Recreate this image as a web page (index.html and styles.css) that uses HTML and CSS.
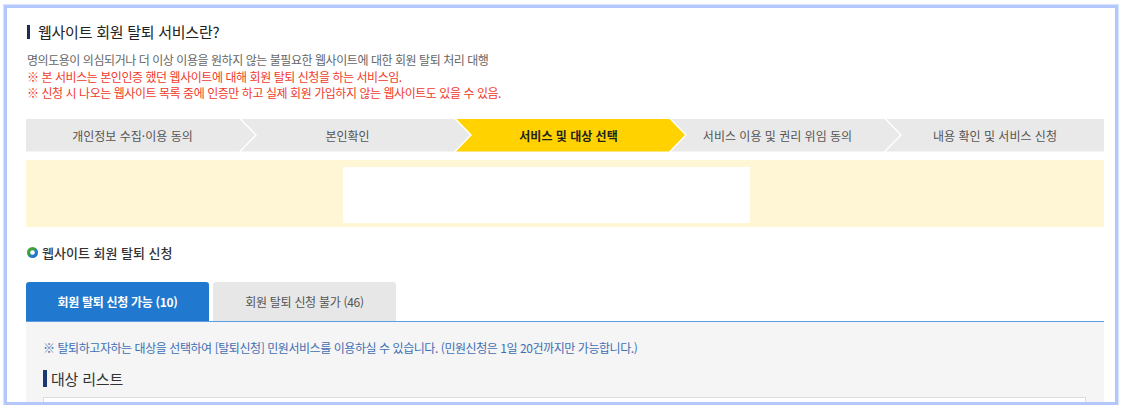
FILE: index.html
```html
<!DOCTYPE html>
<html lang="ko">
<head>
<meta charset="utf-8">
<title>웹사이트 회원 탈퇴 서비스</title>
<link rel="stylesheet" href="styles.css">
</head>
<body>
<div class="frame">
  <div class="content">
    <h2 class="title">웹사이트 회원 탈퇴 서비스란?</h2>
    <p class="desc">명의도용이 의심되거나 더 이상 이용을 원하지 않는 불필요한 웹사이트에 대한 회원 탈퇴 처리 대행</p>
    <p class="warn">※ 본 서비스는 본인인증 했던 웹사이트에 대해 회원 탈퇴 신청을 하는 서비스임.</p>
    <p class="warn">※ 신청 시 나오는 웹사이트 목록 중에 인증만 하고 실제 회원 가입하지 않는 웹사이트도 있을 수 있음.</p>

    <ol class="steps">
      <li class="step first">개인정보 수집·이용 동의</li>
      <li class="step">본인확인</li>
      <li class="step active">서비스 및 대상 선택</li>
      <li class="step">서비스 이용 및 권리 위임 동의</li>
      <li class="step last">내용 확인 및 서비스 신청</li>
    </ol>

    <div class="banner">
      <div class="banner-box"></div>
    </div>

    <h3 class="section">
      <svg class="ring" width="11" height="11" viewBox="0 0 11 11" aria-hidden="true">
        <defs>
          <linearGradient id="rg" x1="0" y1="0" x2="1" y2="1">
            <stop offset="0" stop-color="#4caf2f"/>
            <stop offset="0.45" stop-color="#3a9a3c"/>
            <stop offset="0.55" stop-color="#2c7fd0"/>
            <stop offset="1" stop-color="#1f63c0"/>
          </linearGradient>
        </defs>
        <circle cx="5.5" cy="5.5" r="5.5" fill="url(#rg)"/>
        <circle cx="5.5" cy="5.5" r="2.3" fill="#fff"/>
      </svg>
      웹사이트 회원 탈퇴 신청
    </h3>

    <div class="tabs">
      <div class="tab on">회원 탈퇴 신청 가능 (10)</div>
      <div class="tab">회원 탈퇴 신청 불가 (46)</div>
    </div>

    <div class="panel">
      <p class="notice">※ 탈퇴하고자하는 대상을 선택하여 [탈퇴신청] 민원서비스를 이용하실 수 있습니다. (민원신청은 1일 20건까지만 가능합니다.)</p>
      <h4 class="list-title">대상 리스트</h4>
      <div class="list-box"></div>
    </div>
  </div>
</div>
</body>
</html>
```

FILE: styles.css
```css
* { box-sizing: border-box; }
html, body {
  margin: 0;
  padding: 0;
  background: #fff;
}
body {
  font-family: "Noto Sans CJK KR", "Noto Sans", sans-serif;
  color: #333;
}
.frame {
  margin: 5px 5px 0 4px;
  height: 400px;
  border: 3px solid #b3c7fb;
  box-shadow: 0 0 1px 1px #dbe5fd;
  overflow: hidden;
  background: #fff;
}
.content {
  padding: 14px 11px 0 19px;
}
.title {
  margin: 0;
  font-size: 15px;
  line-height: 20px;
  font-weight: 400;
  color: #222;
  display: flex;
  align-items: center;
  letter-spacing: -0.25px;
}
.title::before {
  content: "";
  width: 3px;
  height: 14px;
  background: #1b2f55;
  margin: 0 8px 0 1px;
}
.desc, .warn {
  margin: 0;
  font-size: 12px;
  line-height: 16.5px;
  letter-spacing: -0.45px;
  padding-left: 1px;
}
.desc {
  margin-top: 10px;
  color: #666;
}
.warn {
  color: #ef3b2c;
}

.steps {
  list-style: none;
  margin: 17px 0 0;
  padding: 0;
  display: flex;
  height: 33px;
  width: 1078px;
}
.step {
  flex: 0 0 229px;
  margin-left: -14px;
  background: #e9e9e9;
  color: #555;
  font-size: 12px;
  display: flex;
  align-items: center;
  justify-content: center;
  padding: 0 24px 0 8px;
  white-space: nowrap;
  clip-path: polygon(0 0, calc(100% - 16px) 0, 100% 50%, calc(100% - 16px) 100%, 0 100%, 16px 50%);
}
.step.first {
  margin-left: 0;
  padding: 0 16px 0 0;
  clip-path: polygon(0 0, calc(100% - 16px) 0, 100% 50%, calc(100% - 16px) 100%, 0 100%);
}
.step.last {
  flex-basis: 218px;
  padding: 0;
  clip-path: polygon(0 0, 100% 0, 100% 100%, 0 100%, 16px 50%);
}
.step.active {
  background: #ffd200;
  color: #222;
  font-weight: 700;
  padding: 0 18px 0 14px;
}

.banner {
  margin-top: 8px;
  width: 1078px;
  height: 67px;
  background: #fff6d5;
  padding: 7px 0 0 317px;
}
.banner-box {
  width: 407px;
  height: 56px;
  background: #fff;
}

.section {
  margin: 17px 0 0;
  font-size: 13px;
  line-height: 18px;
  font-weight: 500;
  color: #333;
  display: flex;
  align-items: center;
  gap: 4px;
  padding-left: 1px;
}
.ring { display: block; }

.tabs {
  margin-top: 20px;
  display: flex;
  gap: 4px;
  width: 1078px;
  border-bottom: 1px solid #5d9de2;
}
.tab {
  width: 183px;
  height: 39px;
  border-radius: 3px 3px 0 0;
  background: #e7e7e7;
  color: #555;
  font-size: 12px;
  letter-spacing: -0.3px;
  display: flex;
  align-items: center;
  justify-content: center;
}
.tab.on {
  background: #2079ce;
  color: #fff;
  font-weight: 700;
}

.panel {
  width: 1078px;
  height: 120px;
  background: #f5f5f5;
  padding: 18px 18px 0 17px;
}
.notice {
  margin: 0;
  font-size: 12px;
  line-height: 16px;
  color: #3f6fb3;
  letter-spacing: -0.44px;
}
.list-title {
  margin: 13px 0 0;
  font-size: 15px;
  line-height: 20px;
  font-weight: 400;
  color: #333;
  display: flex;
  align-items: center;
  letter-spacing: -0.2px;
}
.list-title::before {
  content: "";
  width: 4px;
  height: 17px;
  background: #1b3a73;
  margin-right: 4px;
}
.list-box {
  margin-top: 8px;
  height: 40px;
  background: #fff;
  border: 1px solid #dcdcdc;
}
```
